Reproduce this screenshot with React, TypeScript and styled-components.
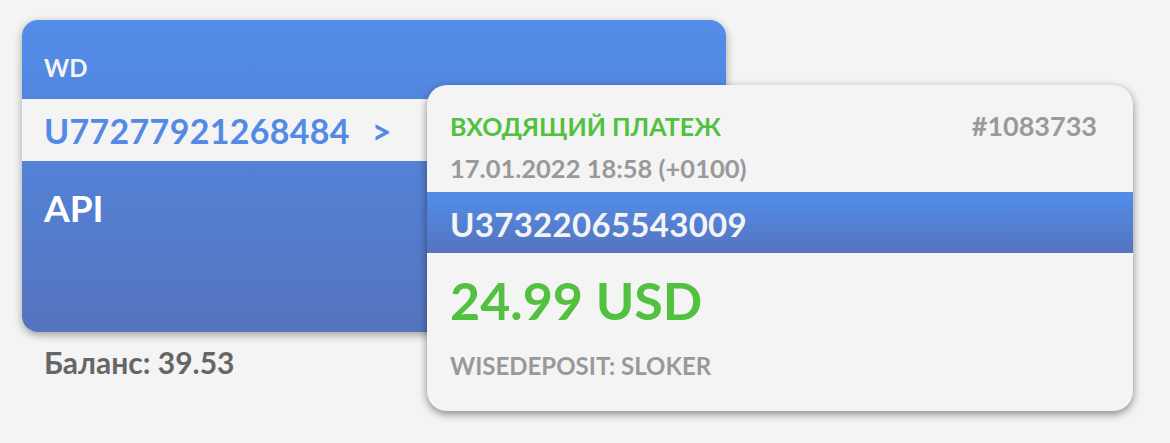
import React from 'react';
import styled, { createGlobalStyle } from 'styled-components';

const GlobalStyle = createGlobalStyle`
  html, body {
    margin: 0;
    padding: 0;
    background: #f4f4f4;
  }
  body {
    font-family: Lato, "Noto Sans", sans-serif;
    font-weight: 700;
  }
`;

const Stage = styled.main`
  display: flex;
  align-items: flex-start;
  padding: 20px 0 0 22px;
  height: 443px;
  box-sizing: border-box;
  overflow: hidden;
`;

const WalletColumn = styled.section`
  display: flex;
  flex-direction: column;
  width: 704px;
  flex-shrink: 0;
`;

const WalletCard = styled.div`
  height: 312px;
  border-radius: 16px;
  overflow: hidden;
  background: linear-gradient(180deg, #528de9 0%, #5574bf 100%);
  box-shadow: 0 3px 8px rgba(0, 0, 0, 0.35);
  display: flex;
  flex-direction: column;
`;

const WalletName = styled.div`
  height: 79px;
  box-sizing: border-box;
  padding: 36px 22px 0;
  color: #f4f4f4;
  font-size: 24px;
  line-height: 24px;
`;

const AccountRow = styled.div`
  height: 62px;
  display: flex;
  align-items: center;
  gap: 22px;
  padding: 0 22px;
  background: #f4f4f4;
  color: #528ae6;
  font-size: 34px;
  letter-spacing: 0.3px;
`;

const WalletType = styled.div`
  padding: 27px 22px 0;
  color: #ffffff;
  font-size: 37px;
  line-height: 40px;
`;

const Balance = styled.div`
  margin-top: 12px;
  padding-left: 22px;
  color: #666666;
  font-size: 30px;
  line-height: 36px;
`;

const PaymentCard = styled.article`
  width: 706px;
  height: 326px;
  margin: 65px 0 0 -299px;
  flex-shrink: 0;
  border-radius: 20px;
  overflow: hidden;
  background: #f4f4f4;
  box-shadow: 0 3px 8px rgba(0, 0, 0, 0.45);
  display: flex;
  flex-direction: column;
`;

const PaymentHead = styled.div`
  height: 107px;
  box-sizing: border-box;
  padding: 26px 36px 0 23px;
  display: flex;
  flex-direction: column;
  gap: 13px;
`;

const HeadRow = styled.div`
  display: flex;
  justify-content: space-between;
  align-items: baseline;
`;

const Label = styled.span<{ $color: string; $size: number }>`
  color: ${(p) => p.$color};
  font-size: ${(p) => p.$size}px;
  line-height: 1.1;
`;

const SenderBand = styled.div`
  height: 61px;
  display: flex;
  align-items: center;
  padding: 2px 23px 0;
  box-sizing: border-box;
  background: linear-gradient(180deg, #528de9 0%, #5574bf 100%);
  color: #f4f4f4;
  font-size: 33px;
  letter-spacing: 0.3px;
`;

const Amount = styled.div`
  padding: 18px 23px 0;
  color: #52c13f;
  font-size: 52px;
  line-height: 58px;
`;

const Comment = styled.div`
  padding: 22px 23px 0;
  color: #999999;
  font-size: 24px;
  line-height: 30px;
`;

export default function App() {
  return (
    <>
      <GlobalStyle />
      <Stage>
        <WalletColumn>
          <WalletCard>
            <WalletName>WD</WalletName>
            <AccountRow>
              <span>U77277921268484</span>
              <span>&gt;</span>
            </AccountRow>
            <WalletType>API</WalletType>
          </WalletCard>
          <Balance>Баланс: 39.53</Balance>
        </WalletColumn>
        <PaymentCard>
          <PaymentHead>
            <HeadRow>
              <Label $color="#52c13f" $size={25}>ВХОДЯЩИЙ ПЛАТЕЖ</Label>
              <Label $color="#999999" $size={27}>#1083733</Label>
            </HeadRow>
            <Label $color="#999999" $size={25.5}>17.01.2022 18:58 (+0100)</Label>
          </PaymentHead>
          <SenderBand>U37322065543009</SenderBand>
          <Amount>24.99 USD</Amount>
          <Comment>WISEDEPOSIT: SLOKER</Comment>
        </PaymentCard>
      </Stage>
    </>
  );
}
